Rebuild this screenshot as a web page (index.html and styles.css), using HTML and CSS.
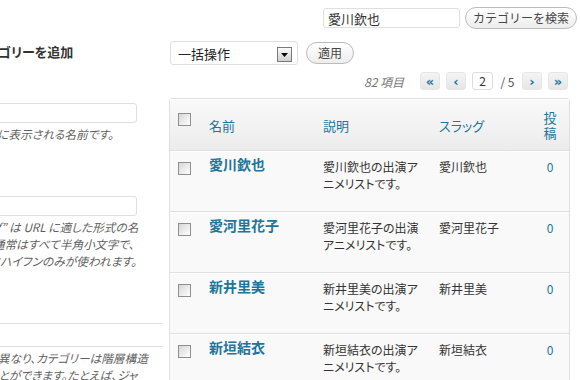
FILE: index.html
```html
<!DOCTYPE html>
<html>
<head>
    <title>カテゴリー</title>
    <link rel="stylesheet" href="styles.css">
</head>
<body>
    <div class="wrap">
        <div class="search-box">
            <input type="text" class="search-input" value="愛川欽也">
            <button class="button">カテゴリーを検索</button>
        </div>

        <div class="col-container">
            <div class="col-left">
                <h3>カテゴリーを追加</h3>
                <div class="form-field">
                    <label>名前</label>
                    <input type="text">
                    <p class="description">サイト上に表示される名前です。</p>
                </div>
                <div class="form-field">
                    <label>スラッグ</label>
                    <input type="text">
                    <p class="description">“スラッグ” は URL に適した形式の名<br>前です。通常はすべて半角小文字で、<br>英数字とハイフンのみが使われます。</p>
                </div>
                <div class="form-field">
                    <label>親</label>
                    <div class="parent-select"></div>
                    <p class="description">タグとは異なり、カテゴリーは階層構造<br>を持つことができます。たとえば、ジャ<br>ズというカテゴリーの下にビバップ</p>
                </div>
            </div>

            <div class="col-right">
                <div class="tablenav-top">
                    <div class="bulk-select">
                        <span>一括操作</span>
                        <span class="select-arrow">
                            <svg width="7" height="4" viewBox="0 0 7 4"><path d="M0 0h7L3.5 4z" fill="#000"/></svg>
                        </span>
                    </div>
                    <button class="button">適用</button>
                </div>

                <div class="tablenav-pages">
                    <span class="displaying-num">82 項目</span>
                    <a class="page-btn">«</a>
                    <a class="page-btn">‹</a>
                    <span class="current-page">2</span>
                    <span class="total-pages">/ 5</span>
                    <a class="page-btn">›</a>
                    <a class="page-btn">»</a>
                </div>

                <table class="list-table">
                    <thead>
                        <tr>
                            <th class="col-cb"><span class="cb"></span></th>
                            <th class="col-name">名前</th>
                            <th class="col-desc">説明</th>
                            <th class="col-slug">スラッグ</th>
                            <th class="col-posts">投稿</th>
                        </tr>
                    </thead>
                    <tbody>
                        <tr>
                            <td class="col-cb"><span class="cb"></span></td>
                            <td class="col-name"><a class="row-title">愛川欽也</a></td>
                            <td class="col-desc">愛川欽也の出演アニメリストです。</td>
                            <td class="col-slug">愛川欽也</td>
                            <td class="col-posts"><a>0</a></td>
                        </tr>
                        <tr>
                            <td class="col-cb"><span class="cb"></span></td>
                            <td class="col-name"><a class="row-title">愛河里花子</a></td>
                            <td class="col-desc">愛河里花子の出演アニメリストです。</td>
                            <td class="col-slug">愛河里花子</td>
                            <td class="col-posts"><a>0</a></td>
                        </tr>
                        <tr>
                            <td class="col-cb"><span class="cb"></span></td>
                            <td class="col-name"><a class="row-title">新井里美</a></td>
                            <td class="col-desc">新井里美の出演アニメリストです。</td>
                            <td class="col-slug">新井里美</td>
                            <td class="col-posts"><a>0</a></td>
                        </tr>
                        <tr>
                            <td class="col-cb"><span class="cb"></span></td>
                            <td class="col-name"><a class="row-title">新垣結衣</a></td>
                            <td class="col-desc">新垣結衣の出演アニメリストです。</td>
                            <td class="col-slug">新垣結衣</td>
                            <td class="col-posts"><a>0</a></td>
                        </tr>
                    </tbody>
                </table>
            </div>
        </div>
    </div>
</body>
</html>
```

FILE: styles.css
```css
body {
  margin: 0;
  overflow: hidden;
  background: #fff;
  color: #333;
  font-family: "Noto Sans CJK JP", "Liberation Sans", sans-serif;
  font-size: 12px;
  font-feature-settings: "palt";
}
.search-box {
  display: flex;
  justify-content: flex-end;
  align-items: center;
  gap: 5px;
  height: 22px;
  padding: 7px 3px 0 0;
}
.search-input {
  width: 137px;
  height: 20px;
  box-sizing: border-box;
  padding: 0 4px;
  border: 1px solid #dfdfdf;
  border-radius: 3px;
  font-family: inherit;
  font-size: 13px;
  color: #333;
}
.button {
  height: 22px;
  padding: 0 11px;
  border: 1px solid #bbb;
  border-radius: 11px;
  background: linear-gradient(#fff, #ededed);
  font-family: inherit;
  font-size: 12px;
  line-height: 20px;
  color: #464646;
}
.search-box .button {
  padding: 0 7px;
}
.col-container {
  display: flex;
  margin-top: 7px;
}
.col-left {
  flex: none;
  width: 208px;
  margin-left: -45px;
}
.col-left h3 {
  margin: 8px 0 0 19px;
  font-size: 13px;
  line-height: 16px;
}
.form-field {
  margin-top: 34px;
}
.form-field:first-of-type {
  margin-top: 23px;
}
.form-field label {
  display: block;
  margin-bottom: 3px;
  line-height: 17px;
  color: #fff;
}
.form-field input {
  display: block;
  width: 182px;
  height: 20px;
  box-sizing: border-box;
  border: 1px solid #dfdfdf;
  border-radius: 3px;
}
.parent-select {
  height: 24px;
  box-sizing: border-box;
  border-top: 1px solid #dfdfdf;
  border-bottom: 1px solid #dfdfdf;
}
.description {
  margin: 2px 0 0;
  font-size: 11.7px;
  line-height: 17px;
  font-style: italic;
  color: #5f5f5f;
  white-space: nowrap;
}
.col-right {
  flex: none;
  width: 401px;
  margin-left: 6px;
}
.tablenav-top {
  display: flex;
  align-items: center;
  gap: 8px;
  height: 24px;
  margin-top: 5px;
}
.bulk-select {
  display: flex;
  justify-content: space-between;
  align-items: center;
  width: 128px;
  height: 24px;
  box-sizing: border-box;
  margin-left: 1px;
  padding: 0 5px 0 7px;
  border: 1px solid #dfdfdf;
  border-radius: 3px;
  background: #fff;
  font-size: 13px;
  color: #222;
}
.select-arrow {
  display: flex;
  justify-content: center;
  align-items: center;
  width: 13px;
  height: 13px;
  margin-top: 3px;
  border: 1px solid #7a7a7a;
  background: linear-gradient(#fafafa, #cfcfcf);
}
.tablenav-pages {
  display: flex;
  justify-content: flex-end;
  align-items: center;
  gap: 6px;
  height: 18px;
  margin: 7px 2px 0 0;
}
.displaying-num {
  margin-right: 10px;
  font-style: italic;
  color: #777;
}
.page-btn {
  display: flex;
  justify-content: center;
  align-items: center;
  width: 20px;
  height: 18px;
  box-sizing: border-box;
  border: 1px solid #e6e6e6;
  border-radius: 3px;
  background: linear-gradient(#f4f4f4, #e6e6e6);
  color: #21759b;
  font-family: "DejaVu Sans", sans-serif;
  font-size: 13px;
  font-weight: bold;
}
.current-page {
  width: 21px;
  height: 18px;
  box-sizing: border-box;
  border: 1px solid #ddd;
  border-radius: 3px;
  background: #fff;
  text-align: center;
  line-height: 16px;
  color: #333;
}
.total-pages {
  width: 17px;
  text-align: center;
  color: #555;
}
.list-table {
  width: 401px;
  margin-top: 8px;
  table-layout: fixed;
  border: 1px solid #dfdfdf;
  border-radius: 3px;
  border-spacing: 0;
  background: #f9f9f9;
}
.list-table th {
  padding: 10px 8px;
  border-top: 1px solid #fff;
  border-bottom: 1px solid #dfdfdf;
  background: linear-gradient(#f9f9f9, #ececec);
  text-align: left;
  vertical-align: middle;
  font-size: 13px;
  font-weight: normal;
  line-height: 15px;
  color: #21759b;
}
.list-table th.col-cb {
  padding-top: 13px;
  vertical-align: top;
}
.list-table td {
  padding: 6px 8px 19px;
  border-top: 1px solid #fff;
  border-bottom: 1px solid #dfdfdf;
  vertical-align: top;
  line-height: 17px;
}
.col-cb {
  width: 15px;
}
.col-name {
  width: 98px;
}
.col-desc {
  width: 98px;
}
.list-table .col-desc {
  padding-right: 10px;
}
.col-slug {
  width: 84px;
}
.col-posts {
  width: 22px;
}
.list-table .col-posts {
  text-align: center;
}
.list-table td.col-name {
  line-height: 13px;
}
.row-title {
  font-size: 14px;
  font-weight: bold;
  color: #21759b;
}
.col-posts a {
  color: #21759b;
}
.cb {
  display: block;
  width: 13px;
  height: 13px;
  box-sizing: border-box;
  border: 1px solid #8f8f8f;
  background: linear-gradient(135deg, #d6d6d6, #fff);
}
td .cb {
  margin-top: 4px;
}
```
